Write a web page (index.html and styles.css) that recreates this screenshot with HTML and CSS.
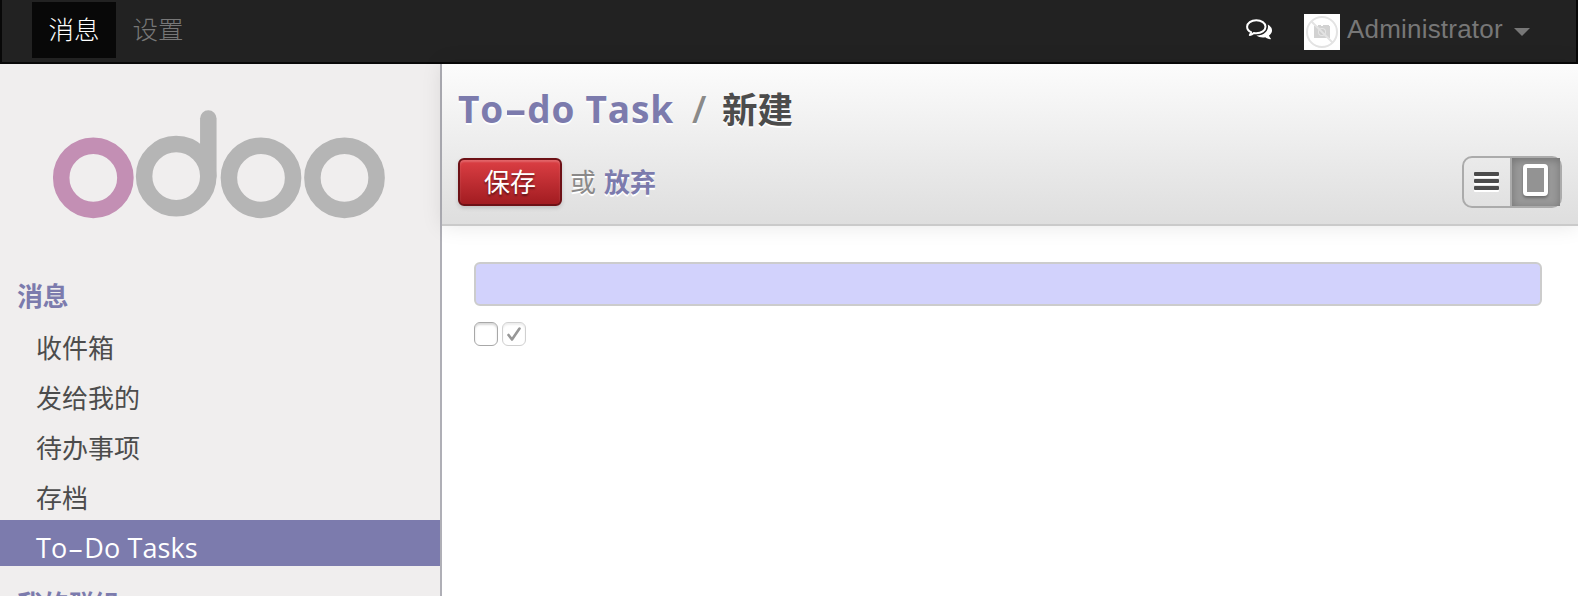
FILE: index.html
```html
<!DOCTYPE html>
<html lang="zh-CN">
<head>
<meta charset="utf-8">
<title>To-do Task</title>
<link rel="stylesheet" href="styles.css">
</head>
<body>
<header class="topbar">
  <nav class="menu">
    <a class="menu-item active">消息</a>
    <a class="menu-item">设置</a>
  </nav>
  <div class="user-area">
    <svg class="chat" width="26" height="22" viewBox="0 0 26 22">
      <path d="M21.800 5.500C24.500 7 26 9.200 26 11.500c0 2-1.200 3.800-3 5 .3 1.300 1 2 1.800 2.900.3.500 0 .9-.5.800-2-.2-3.700-1-5-2-3 .6-6.700.1-9-1.700 7.500.2 13-4.700 11.500-11z" fill="#fff"/>
      <path d="M10.300 1.200c5.100 0 9.200 2.800 9.200 6.500s-4.100 6.500-9.200 6.500c-.9 0-1.700-.1-2.500-.2-1.200 1-2.600 1.700-4 2 .7-.9 1.100-1.800 1.300-2.900C2.600 12 1.100 10 1.100 7.700c0-3.700 4.100-6.500 9.200-6.500z" fill="#222" stroke="#fff" stroke-width="2" stroke-linejoin="round"/>
    </svg>
    <svg class="avatar" width="36" height="36" viewBox="0 0 36 36">
      <rect width="36" height="36" fill="#fff"/>
      <path d="M10 12h4v-1h3v1h2v-1h6v1h1v12H10z" fill="#d2d2d2"/>
      <circle cx="18" cy="18" r="4" fill="#e6e6e6"/>
      <circle cx="18" cy="18" r="3" fill="#cdcdcd"/>
      <circle cx="18" cy="18" r="15" fill="none" stroke="#e3e3e3" stroke-width="2"/>
      <path d="M7.500 7.500l21 21" stroke="#e3e3e3" stroke-width="2"/>
    </svg>
    <span class="user-name">Administrator</span>
    <span class="caret"></span>
  </div>
</header>
<div class="page">
  <aside class="sidebar">
    <svg class="logo" width="336" height="112" viewBox="0 0 336 112" fill="none" stroke="#b5b5b5" stroke-width="16.500">
      <circle cx="43.300" cy="69.800" r="32.100" stroke="#c38fb4"/>
      <path d="M158.300 68V10.500" stroke-linecap="round"/>
      <circle cx="126.200" cy="68.200" r="32.100"/>
      <circle cx="211" cy="69.800" r="32.100"/>
      <circle cx="294.500" cy="69.800" r="32.100"/>
    </svg>
    <h3 class="section">消息</h3>
    <ul class="links">
      <li class="link">收件箱</li>
      <li class="link">发给我的</li>
      <li class="link">待办事项</li>
      <li class="link">存档</li>
      <li class="link selected">To<span class="dash">-</span>Do Tasks</li>
    </ul>
    <h3 class="section">我的群组</h3>
  </aside>
  <main class="content">
    <section class="control">
      <h2 class="crumbs"><a class="crumb">To<span class="dash">-</span>do Task</a><span class="slash">/</span><span class="current">新建</span></h2>
      <div class="tools">
        <button class="save">保存</button>
        <span class="or">或</span>
        <a class="discard">放弃</a>
        <div class="switch">
          <span class="view"><svg width="26" height="20" viewBox="0 0 26 20"><g fill="#fff"><rect y="2" width="25" height="4" rx="1"/><rect y="9" width="25" height="4" rx="1"/><rect y="16" width="25" height="4" rx="1"/></g><g fill="#4c4c4c"><rect width="25" height="4" rx="1"/><rect y="7" width="25" height="4" rx="1"/><rect y="14" width="25" height="4" rx="1"/></g></svg></span>
          <span class="view on"><span class="sheet"></span></span>
        </div>
      </div>
    </section>
    <section class="form">
      <input class="field" type="text">
      <div class="checks">
        <span class="check"></span>
        <span class="check done"><svg width="14" height="14" viewBox="0 0 14 14"><path d="M1.500 8l3.500 4.500L12.500 1.500" fill="none" stroke="#979797" stroke-width="2.600" stroke-linecap="round" stroke-linejoin="round"/></svg></span>
      </div>
    </section>
  </main>
</div>
</body>
</html>
```
FILE: styles.css
```css
* { box-sizing: border-box; }
body {
  margin: 0;
  height: 596px;
  overflow: hidden;
  display: flex;
  flex-direction: column;
  background: #fff;
  color: #4c4c4c;
  font: 26px/36px "Open Sans", "Noto Sans CJK SC", sans-serif;
}
h2, h3, ul { margin: 0; padding: 0; list-style: none; }

.topbar {
  flex: none;
  height: 64px;
  display: flex;
  justify-content: space-between;
  background: #222;
  border: 2px solid #080808;
  border-top: 0;
}
.menu { display: flex; padding: 2px 0 0 30px; }
.menu-item {
  width: 84px;
  height: 56px;
  line-height: 54px;
  text-align: center;
  color: #777;
  font-size: 25.5px;
  font-weight: 300;
}
.menu-item.active { background: #080808; color: #fff; }
.user-area { display: flex; align-items: flex-start; padding-right: 46px; }
.chat { margin: 19px 32px 0 0; }
.avatar { margin: 14px 7px 0 0; }
.user-name {
  width: 156px;
  white-space: nowrap;
  color: #777;
  font: 26px/59px "Liberation Sans", sans-serif;
  letter-spacing: 0.2px;
}
.caret {
  margin: 28px 0 0 11px;
  border: 8px solid transparent;
  border-top-color: #777;
  border-bottom: 0;
}

.page { flex: 1; min-height: 0; display: flex; }
.sidebar {
  flex: none;
  width: 442px;
  background: #f0eeee;
  border-right: 2px solid #afafb6;
  overflow: hidden;
}
.logo { display: block; margin: 44px 0 0 50px; }
.section {
  padding: 0 0 0 17px;
  height: 40px;
  margin-top: 56px;
  font-size: 26px;
  line-height: 41px;
  letter-spacing: -0.5px;
  color: #7c7bad;
}
.links { display: flex; flex-direction: column; gap: 4px; padding-top: 4px; }
.link { height: 46px; padding: 10px 0 0 36px; line-height: 36px; }
.link.selected { background: #7c7bad; color: #fff; font-weight: 500; letter-spacing: 0.1px; white-space: nowrap; font-size: 27px; }
.dash { display: inline-block; width: 0.63em; text-align: center; transform: scaleX(1.8); letter-spacing: 0; }
.links + .section { margin-top: 18px; }

.content { flex: 1; min-width: 0; }
.control {
  height: 162px;
  padding: 22px 16px 0;
  background: linear-gradient(#fcfcfc, #dedede);
  border-bottom: 2px solid #cacaca;
  box-shadow: 0 0 20px rgba(0, 0, 0, 0.1);
}
.crumbs {
  display: flex;
  height: 46px;
  line-height: 46px;
  font-size: 37px;
  white-space: nowrap;
  text-shadow: 0 2px 0 #fff;
}
.crumb { width: 217px; color: #7c7bad; letter-spacing: 0.8px; }
.slash { width: 47px; padding-left: 17px; color: #8a8a89; font-weight: 600; }
.current { font-size: 35.5px; }
.tools { display: flex; align-items: center; height: 52px; margin-top: 24px; }
.save {
  width: 104px;
  height: 48px;
  padding: 0 0 2px;
  border: 2px solid #6d1116;
  border-radius: 6px;
  background: linear-gradient(#dc3f44, #a21c21);
  box-shadow: 0 2px 4px rgba(0, 0, 0, 0.15), inset 0 2px 2px rgba(255, 255, 255, 0.2);
  color: #fff;
  font: 26px/42px "Noto Sans CJK SC", sans-serif;
  text-shadow: 0 2px 2px rgba(0, 0, 0, 0.45);
}
.or { margin-left: 8px; color: #8a8989; text-shadow: 0 2px 0 #fff; }
.discard { margin-left: 8px; font-weight: 700; color: #7c7bad; text-shadow: 0 2px 0 #fff; }
.switch {
  display: flex;
  width: 100px;
  height: 52px;
  margin-left: auto;
  border: 2px solid #ababab;
  border-radius: 10px;
}
.view { width: 46px; display: flex; justify-content: center; align-items: center; }
.view.on {
  width: 50px;
  border-left: 2px solid #ababab;
  background: #999;
  box-shadow: inset 0 2px 8px rgba(0, 0, 0, 0.25);
}
.sheet {
  width: 25px;
  height: 32px;
  border: 4px solid #fff;
  border-radius: 4px;
  margin: 0 2px 4px 0;
  background: #939393;
  box-shadow: 0 2px 3px rgba(0, 0, 0, 0.3);
}

.form { padding: 36px 36px 0 32px; }
.field {
  display: block;
  width: 100%;
  height: 44px;
  border: 2px solid #ccc;
  border-radius: 6px;
  background: #d2d2fc;
}
.checks { display: flex; gap: 4px; padding-top: 16px; }
.check {
  width: 24px;
  height: 24px;
  display: flex;
  align-items: center;
  justify-content: center;
  border: 1.5px solid #a8a8a8;
  border-radius: 6px;
  background: #fff;
  box-shadow: inset 0 2px 2px rgba(0, 0, 0, 0.15);
}
.check.done { border-color: #d0d0d0; box-shadow: inset 0 2px 2px rgba(0, 0, 0, 0.07); }
```
